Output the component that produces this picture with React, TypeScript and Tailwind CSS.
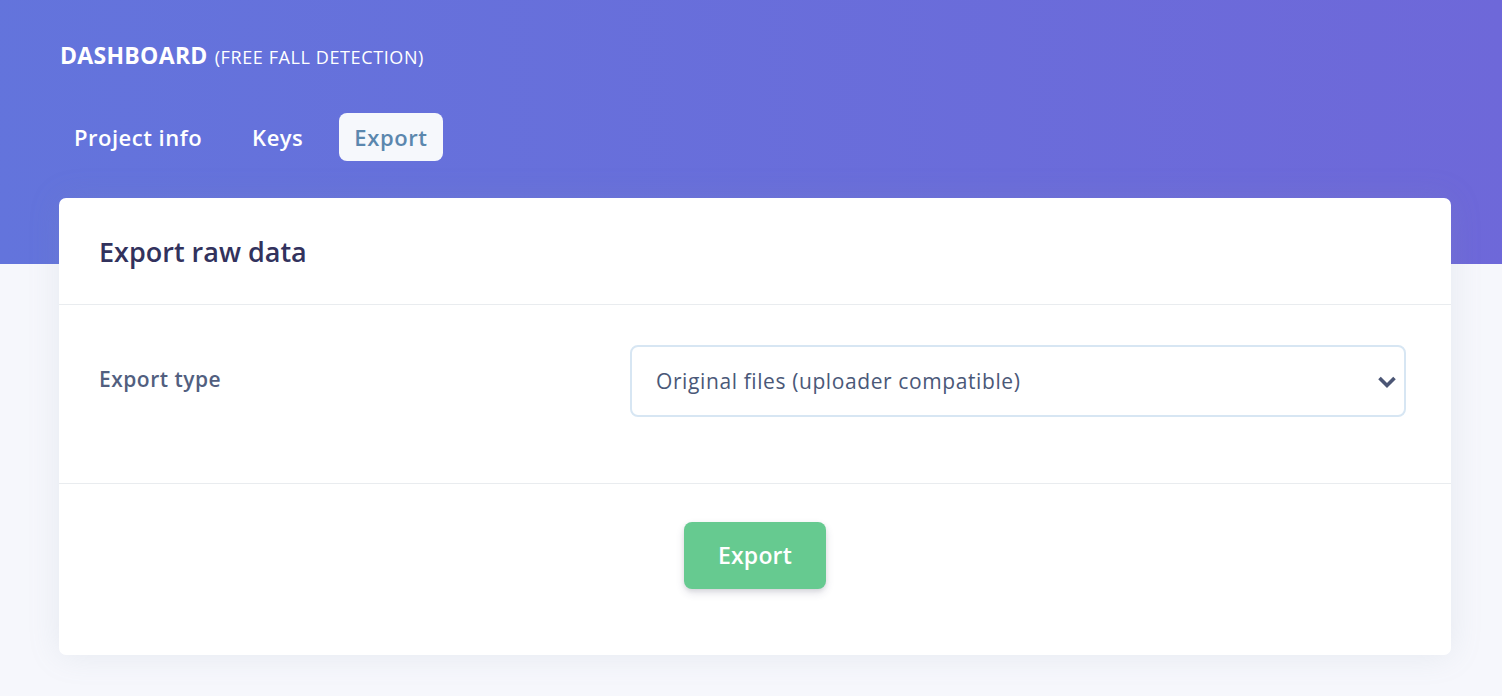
import React from "react";

export default function App() {
  return (
    <div
      className="min-h-[696px] bg-[#f6f7fc]"
      style={{ fontFamily: '"Open Sans", "Noto Sans", sans-serif' }}
    >
      <div className="h-[264px] bg-[linear-gradient(87deg,#6374dc_0%,#6e68d9_100%)] pl-[60px] pt-[40px]">
        <div className="flex items-baseline text-white">
          <span className="text-[23px] font-bold leading-[30px] tracking-[0.3px]">DASHBOARD</span>
          <span className="ml-[7px] text-[18px] font-normal leading-[30px] tracking-[0.6px]">(FREE FALL DETECTION)</span>
        </div>
        <div className="mt-[41px] flex items-center gap-[22px]">
          <div className="h-[48px] px-[14px] text-[22px] font-semibold leading-[48px] tracking-[0.5px] text-white">Project info</div>
          <div className="h-[48px] px-[14px] text-[22px] font-semibold leading-[48px] tracking-[0.5px] text-white">Keys</div>
          <div className="h-[48px] rounded-[8px] bg-[#f6f8fc] px-[15px] text-[22px] font-semibold leading-[48px] tracking-[0.6px] text-[#5b87ae]">Export</div>
        </div>
      </div>
      <div className="-mt-[66px] ml-[59px] mr-[51px] rounded-[7px] bg-white shadow-[0_0_32px_rgba(136,152,170,0.15)]">
        <div className="flex h-[107px] items-center border-b border-[#e9ecef] px-[40px]">
          <h3 className="text-[27px] font-semibold leading-none text-[#32325d]">Export raw data</h3>
        </div>
        <div className="flex border-b border-[#e9ecef] pl-[40px] pt-[40px] pb-[66px]">
          <div className="w-[531px] pt-[20px] text-[21px] font-semibold leading-[28px] tracking-[0.5px] text-[#525f7f]">Export type</div>
          <div className="relative flex h-[72px] w-[776px] items-center rounded-[8px] border-2 border-[#d7e6f3] pl-[24px]">
            <span className="text-[21px] leading-[28px] tracking-[0.6px] text-[#4a5878]">Original files (uploader compatible)</span>
            <svg
              className="absolute right-[7px] top-[28px]"
              width="20"
              height="14"
              viewBox="0 0 20 14"
            >
              <path d="M2.5 3 L10 10.5 L17.5 3" fill="none" stroke="#4b5675" strokeWidth="3.6" strokeLinecap="butt" />
            </svg>
          </div>
        </div>
        <div className="flex h-[171px] justify-center pt-[38px]">
          <button className="h-[67px] w-[142px] rounded-[8px] bg-[#66ca90] text-[23px] font-semibold tracking-[0.2px] text-white shadow-[0_4px_8px_rgba(50,50,93,0.14),0_2px_4px_rgba(0,0,0,0.08)]">
            Export
          </button>
        </div>
      </div>
    </div>
  );
}
